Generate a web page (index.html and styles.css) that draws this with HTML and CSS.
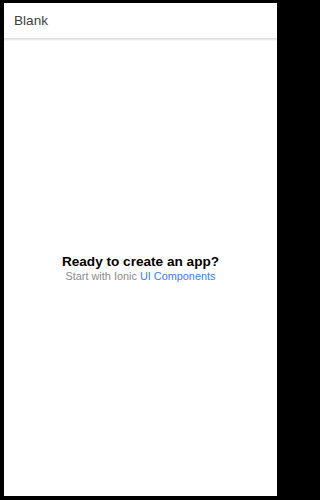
FILE: index.html
```html
<!DOCTYPE html>
<html>
<head>
<meta charset="utf-8">
<link rel="stylesheet" href="styles.css">
</head>
<body>
<div class="frame">
  <header class="header">
    <div class="toolbar"><span class="title">Blank</span></div>
    <div class="shadow"></div>
  </header>
  <main class="content">
    <div class="container">
      <strong class="headline">Ready to create an app?</strong>
      <p class="sub">Start with Ionic <a class="link" href="#">UI Components</a></p>
    </div>
  </main>
</div>
</body>
</html>
```
FILE: styles.css
```css
html {
  margin: 0;
  padding: 0;
  height: 100%;
  background: #000;
}
body {
  margin: 0;
  width: 281px;
  height: 100%;
  padding: 3px 4px 4px 4px;
  box-sizing: border-box;
  background: #000;
  font-family: "Liberation Sans", Arial, sans-serif;
}
.frame {
  height: 100%;
  background: #fff;
  display: flex;
  flex-direction: column;
}
.header {
  flex: none;
}
.toolbar {
  height: 35px;
  display: flex;
  align-items: center;
  padding-left: 10px;
}
.title {
  font-size: 13.6px;
  color: #424242;
  line-height: 1;
}
.shadow {
  height: 3px;
  background: linear-gradient(to bottom, #d8d8d8, #eeeeee 60%, #ffffff);
}
.content {
  flex: 1;
  display: flex;
  align-items: center;
  justify-content: center;
}
.container {
  text-align: center;
}
.headline {
  display: block;
  font-size: 13.6px;
  line-height: 16px;
  font-weight: bold;
  color: #000;
}
.sub {
  margin: 0;
  font-size: 10.88px;
  line-height: 13px;
  color: #8c8c8c;
}
.link {
  color: #3880ff;
  text-decoration: none;
}
```
